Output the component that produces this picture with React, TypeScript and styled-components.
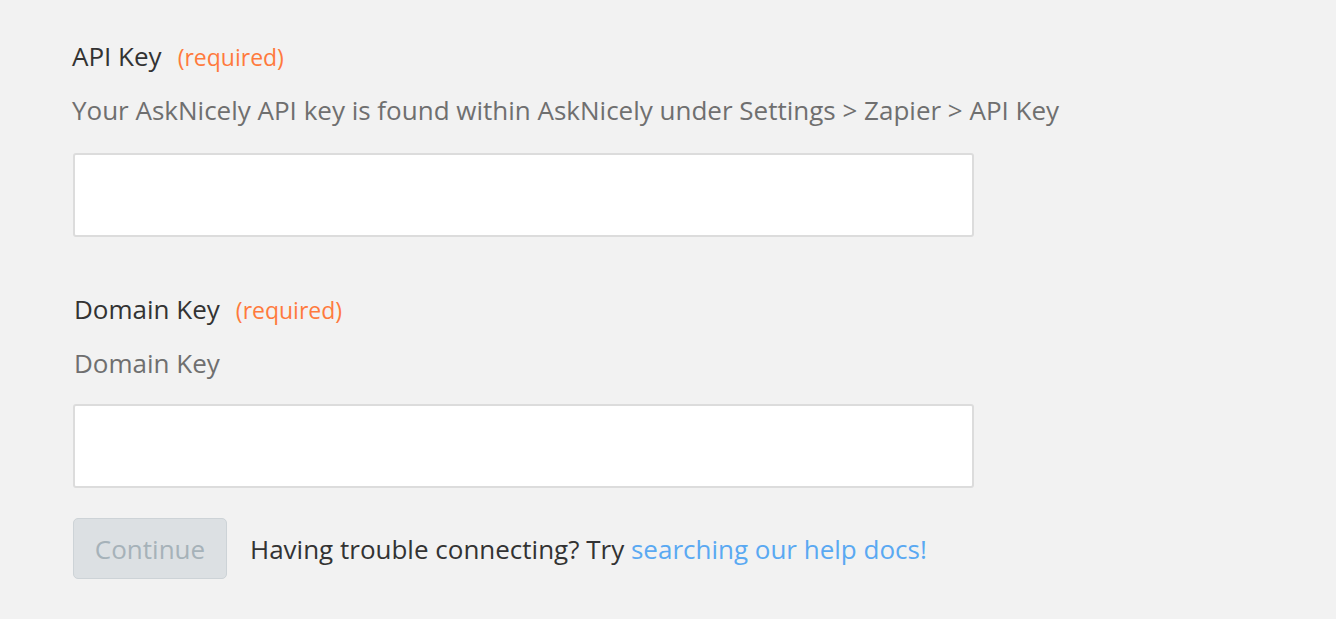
import React from "react";
import styled, { createGlobalStyle } from "styled-components";

const Global = createGlobalStyle`
  html, body { margin: 0; padding: 0; background: #f2f2f2; }
  body { font-family: "Open Sans", "Noto Sans", sans-serif; }
`;

const Page = styled.div`
  width: 1336px;
  height: 619px;
  box-sizing: border-box;
  padding: 37px 0 0 73px;
  display: flex;
  flex-direction: column;
  background: #f2f2f2;
`;

const Field = styled.div<{ $gap: number }>`
  display: flex;
  flex-direction: column;
  margin-bottom: ${(p) => p.$gap}px;
`;

const Label = styled.div<{ $shift: number }>`
  font-size: 26px;
  line-height: 38px;
  color: #333;
  margin-left: ${(p) => p.$shift}px;
`;

const Required = styled.span`
  color: #ff7a3d;
  font-size: 23px;
  margin-left: 16px;
`;

const Help = styled.div<{ $shift: number }>`
  font-size: 26px;
  line-height: 38px;
  color: #6f6f6f;
  margin-top: 15px;
  margin-left: ${(p) => p.$shift}px;
`;

const Input = styled.input<{ $top: number }>`
  box-sizing: border-box;
  width: 901px;
  height: 84px;
  margin-top: ${(p) => p.$top}px;
  border: 2px solid #dcdcdc;
  border-radius: 3px;
  background: #fff;
  outline: none;
  font-family: inherit;
  font-size: 24px;
  padding: 0 16px;
`;

const Footer = styled.div`
  display: flex;
  align-items: center;
  gap: 23px;
`;

const Button = styled.button`
  box-sizing: border-box;
  width: 154px;
  height: 61px;
  background: #dce0e3;
  border: 1px solid #cdd3d7;
  border-radius: 5px;
  color: #a6b2b9;
  font-family: inherit;
  font-size: 26px;
  padding: 0;
`;

const Note = styled.div`
  font-size: 26px;
  color: #333;
`;

const Link = styled.a`
  color: #5aa9f2;
  text-decoration: none;
`;

export default function App() {
  return (
    <>
      <Global />
      <Page>
        <Field $gap={53}>
          <Label $shift={-1}>
            API Key<Required>(required)</Required>
          </Label>
          <Help $shift={-1}>
            Your AskNicely API key is found within AskNicely under Settings &gt; Zapier &gt; API Key
          </Help>
          <Input $top={24} />
        </Field>
        <Field $gap={30}>
          <Label $shift={1}>
            Domain Key<Required>(required)</Required>
          </Label>
          <Help $shift={1}>Domain Key</Help>
          <Input $top={22} />
        </Field>
        <Footer>
          <Button disabled>Continue</Button>
          <Note>
            Having trouble connecting? Try <Link href="#">searching our help docs!</Link>
          </Note>
        </Footer>
      </Page>
    </>
  );
}
